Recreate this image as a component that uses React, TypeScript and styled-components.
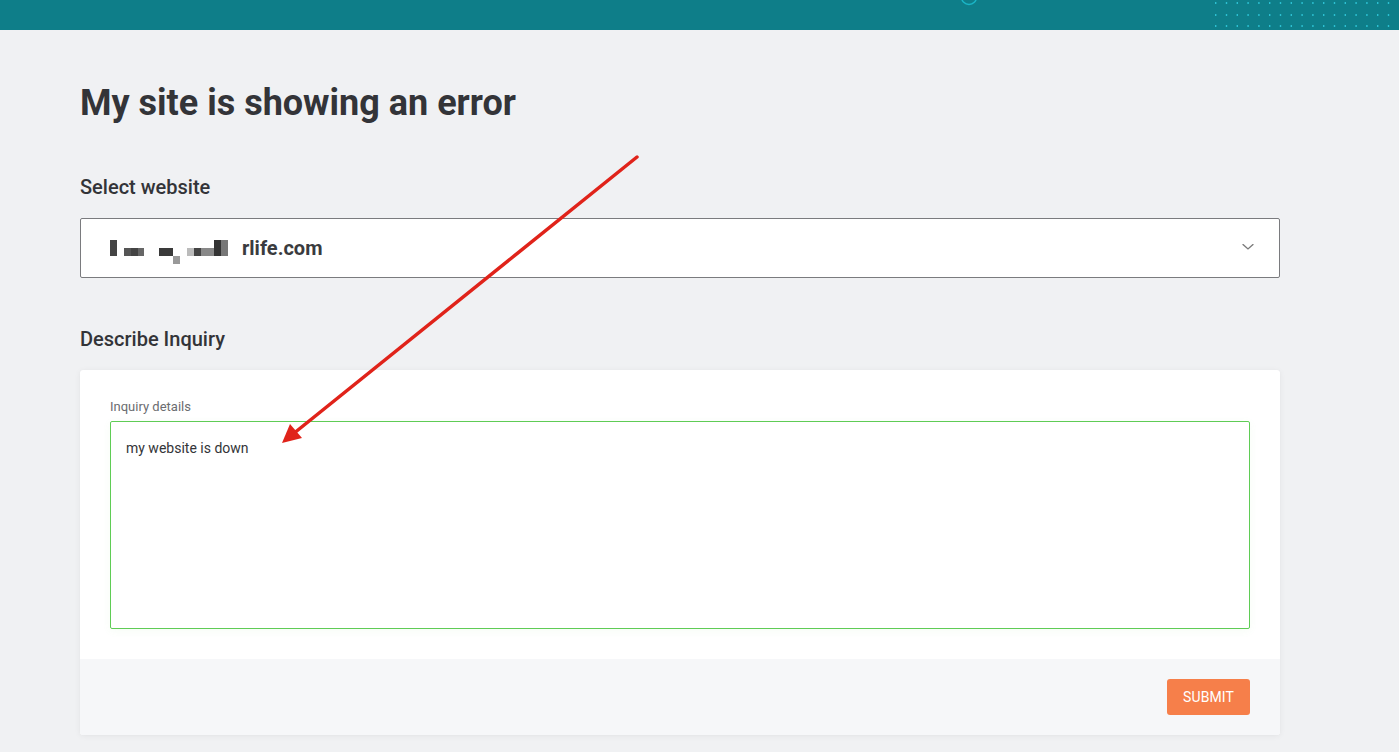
import React from 'react';
import styled, { createGlobalStyle } from 'styled-components';

const GlobalStyle = createGlobalStyle`
  html, body {
    margin: 0;
    padding: 0;
    background: #f0f1f3;
    font-family: Roboto, 'Liberation Sans', Arial, sans-serif;
    color: #333438;
  }
  * { box-sizing: border-box; }
`;

const Page = styled.div`
  position: relative;
  min-height: 752px;
  background: #f0f1f3;
`;

const TopBar = styled.header`
  position: relative;
  height: 30px;
  background: #0e7e89;
  overflow: hidden;
`;

const BarArt = styled.svg`
  display: block;
  width: 100%;
  height: 30px;
`;

const Content = styled.main`
  width: 1200px;
  margin-left: 80px;
  padding-top: 53px;
`;

const Title = styled.h1`
  margin: 0;
  font-size: 36px;
  line-height: 40px;
  font-weight: 700;
  color: #333438;
`;

const SectionLabel = styled.h2<{ $top: number }>`
  margin: ${p => p.$top}px 0 0;
  font-size: 20px;
  line-height: 24px;
  font-weight: 500;
  color: #333438;
`;

const SelectBox = styled.div`
  margin-top: 19px;
  height: 60px;
  background: #fff;
  border: 1px solid #7a7b7e;
  border-radius: 2px;
  display: flex;
  align-items: center;
  justify-content: space-between;
  padding: 0 24px 0 28px;
`;

const SiteName = styled.div`
  display: flex;
  align-items: flex-start;
  height: 24px;
  font-size: 20px;
  font-weight: 700;
  color: #3a3b3e;
  line-height: 24px;
`;

const Pixel = styled.span<{ $w: number; $h: number; $c: string; $y: number; $gap?: number }>`
  display: inline-block;
  width: ${p => p.$w}px;
  height: ${p => p.$h}px;
  background: ${p => p.$c};
  margin-top: ${p => p.$y}px;
  margin-left: ${p => p.$gap ?? 0}px;
`;

const Domain = styled.span`
  margin-left: 14px;
`;

const Chevron = styled.svg`
  width: 14px;
  height: 14px;
  color: #7a7a7a;
`;

const Card = styled.section`
  margin-top: 19px;
  background: #fff;
  border-radius: 3px;
  box-shadow: 0 1px 6px rgba(0, 0, 0, 0.06), 0 0 1px rgba(0, 0, 0, 0.05);
  overflow: hidden;
`;

const CardBody = styled.div`
  padding: 29px 30px 30px;
`;

const FieldLabel = styled.label`
  display: block;
  font-size: 13px;
  line-height: 16px;
  color: #6b6c70;
  margin-bottom: 6px;
`;

const TextArea = styled.div`
  height: 208px;
  border: 1px solid #5fcc55;
  border-radius: 2px;
  padding: 17px 15px;
  font-size: 14px;
  line-height: 18px;
  color: #333438;
  box-shadow: 0 2px 8px rgba(95, 204, 85, 0.06);
`;

const CardFooter = styled.div`
  background: #f6f7f9;
  height: 76px;
  padding: 20px 30px;
  display: flex;
  justify-content: flex-end;
`;

const SubmitButton = styled.button`
  width: 83px;
  height: 36px;
  border: none;
  border-radius: 3px;
  background: #f67f4a;
  color: #fff;
  font-family: Roboto, 'Liberation Sans', Arial, sans-serif;
  font-size: 14px;
  font-weight: 400;
  letter-spacing: 0.1px;
`;

const Annotation = styled.svg`
  position: absolute;
  left: 0;
  top: 0;
  width: 1399px;
  height: 752px;
  pointer-events: none;
`;

const dotsX = Array.from({ length: 17 }, (_, i) => 1215 + i * 10.8);
const dotsY = [3, 15, 26];

export default function App() {
  return (
    <Page>
      <GlobalStyle />
      <TopBar>
        <BarArt viewBox="0 0 1399 30" preserveAspectRatio="none">
          <circle cx="969" cy="-3" r="7.5" fill="none" stroke="#1ab5c6" strokeWidth="1.5" />
          {dotsY.map(y =>
            dotsX.map(x => <rect key={`${x}-${y}`} x={x} y={y - 1} width="1.4" height="2" fill="#2cc0d2" />)
          )}
        </BarArt>
      </TopBar>

      <Content>
        <Title>My site is showing an error</Title>

        <SectionLabel $top={52}>Select website</SectionLabel>
        <SelectBox>
          <SiteName>
            <Pixel $w={7} $h={16} $c="#444" $y={4} $gap={1} />
            <Pixel $w={7} $h={8} $c="#555" $y={12} $gap={7} />
            <Pixel $w={7} $h={8} $c="#444" $y={12} />
            <Pixel $w={6} $h={8} $c="#666" $y={12} />
            <Pixel $w={14} $h={8} $c="#3a3a3a" $y={12} $gap={15} />
            <Pixel $w={7} $h={8} $c="#999" $y={20} />
            <Pixel $w={7} $h={8} $c="#bbb" $y={12} $gap={7} />
            <Pixel $w={7} $h={8} $c="#444" $y={12} />
            <Pixel $w={13} $h={8} $c="#888" $y={12} />
            <Pixel $w={7} $h={16} $c="#333" $y={4} />
            <Pixel $w={7} $h={16} $c="#777" $y={4} />
            <Domain>rlife.com</Domain>
          </SiteName>
          <Chevron viewBox="0 0 14 14" fill="none" stroke="currentColor" strokeWidth="1.3" strokeLinecap="round">
            <path d="M2 5l5 5 5-5" transform="translate(0 -1) scale(1 0.9)" />
          </Chevron>
        </SelectBox>

        <SectionLabel $top={49}>Describe Inquiry</SectionLabel>
        <Card>
          <CardBody>
            <FieldLabel>Inquiry details</FieldLabel>
            <TextArea>my website is down</TextArea>
          </CardBody>
          <CardFooter>
            <SubmitButton>SUBMIT</SubmitButton>
          </CardFooter>
        </Card>
      </Content>

      <Annotation viewBox="0 0 1399 752">
        <line x1="637" y1="157" x2="293" y2="434" stroke="#e0231a" strokeWidth="3.5" strokeLinecap="round" />
        <polygon points="282,443 290,424 302,438" fill="#e0231a" />
      </Annotation>
    </Page>
  );
}
